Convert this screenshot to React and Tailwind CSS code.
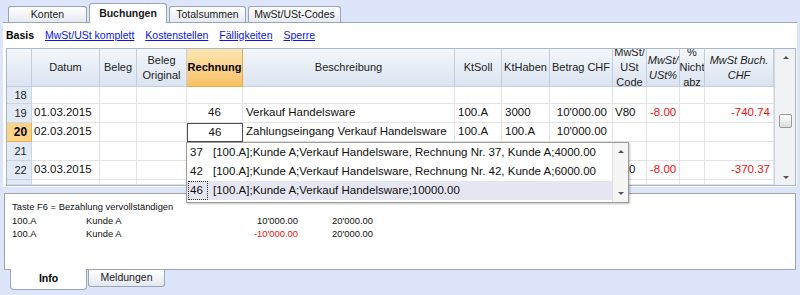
const cols = [
  { w: 'w-[25px]', head: '' },
  { w: 'w-[68px]', head: 'Datum', cell: 'justify-start pl-[2px]' },
  { w: 'w-[37px]', head: 'Beleg', cell: 'justify-start pl-[2px]' },
  { w: 'w-[50px]', head: 'Beleg\nOriginal', cell: 'justify-start pl-[2px]' },
  { w: 'w-[56px]', head: 'Rechnung', cell: 'justify-center' },
  { w: 'w-[212px]', head: 'Beschreibung', cell: 'justify-start pl-[3px]' },
  { w: 'w-[47px]', head: 'KtSoll', cell: 'justify-start pl-[3px]' },
  { w: 'w-[48px]', head: 'KtHaben', cell: 'justify-start pl-[3px]' },
  { w: 'w-[63px]', head: 'Betrag CHF', cell: 'justify-end pr-[5px]' },
  { w: 'w-[34px]', head: 'MwSt/\nUSt\nCode', cell: 'justify-start pl-[2px]' },
  { w: 'w-[33px]', head: 'MwSt/\nUSt%', italic: true, cell: 'justify-start pl-[3px]' },
  { w: 'w-[25px]', head: '%\nNicht\nabz', cell: 'justify-start pl-[2px]' },
  { w: 'w-[69px]', head: 'MwSt Buch.\nCHF', italic: true, cell: 'justify-end pr-[3px]' },
]

const rows = [
  { n: '18', h: 'h-[17px]', v: [] },
  { n: '19', h: 'h-[19px]', v: ['01.03.2015', '', '', '46', 'Verkauf Handelsware', '100.A', '3000', "10'000.00", 'V80', '-8.00', '', '-740.74'] },
  { n: '20', h: 'h-[19px]', v: ['02.03.2015', '', '', '46', 'Zahlungseingang Verkauf Handelsware', '100.A', '100.A', "10'000.00"], current: true },
  { n: '21', h: 'h-[19px]', v: [] },
  { n: '22', h: 'h-[19px]', v: ['03.03.2015', '', '', '', '', '', '', '', 'V80', '-8.00', '', '-370.37'] },
  { n: '', h: 'h-[5px]', v: [] },
]

const redCols = [9, 11]

const popupItems = [
  { n: '37', t: '[100.A];Kunde A;Verkauf Handelsware, Rechnung Nr. 37, Kunde A;4000.00' },
  { n: '42', t: '[100.A];Kunde A;Verkauf Handelsware, Rechnung Nr. 42, Kunde A;6000.00' },
  { n: '46', t: '[100.A];Kunde A;Verkauf Handelsware;10000.00', active: true },
]

function Tab({ label, active, width }) {
  return (
    <div
      className={`${width} flex items-center justify-center border border-[#98a5b9] border-b-0 rounded-t-[3px] text-[10.5px] text-[#1a1a1a] ${
        active
          ? 'h-[20px] bg-white font-bold relative z-10 -mb-px'
          : 'h-[16px] bg-gradient-to-b from-white to-[#e6eaf1]'
      }`}
    >
      {label}
    </div>
  )
}

function UpArrow() {
  return <div className="w-0 h-0 border-l-[3px] border-r-[3px] border-b-[3px] border-l-transparent border-r-transparent border-b-[#555]" />
}

function DownArrow() {
  return <div className="w-0 h-0 border-l-[3px] border-r-[3px] border-t-[3px] border-l-transparent border-r-transparent border-t-[#555]" />
}

export default function App() {
  return (
    <div className="relative w-[800px] h-[295px] overflow-hidden bg-[#dce5fa] font-['Liberation_Sans',Arial,sans-serif] text-black flex flex-col">
      {/* Top tabs */}
      <div className="h-[22px] flex items-end pl-[8px] gap-[2px] shrink-0">
        <Tab label="Konten" width="w-[79px]" />
        <Tab label="Buchungen" width="w-[78px]" active />
        <Tab label="Totalsummen" width="w-[77px]" />
        <Tab label="MwSt/USt-Codes" width="w-[93px]" />
      </div>

      {/* Main panel */}
      <div className="mx-[3px] h-[165px] bg-white border-t border-[#98a5b9] shrink-0 flex flex-col">
        <div className="h-[25px] flex items-center gap-[11px] pl-[3px] text-[10.5px]">
          <span className="font-bold">Basis</span>
          <span className="text-[#0a14f0] underline">MwSt/USt komplett</span>
          <span className="text-[#0a14f0] underline">Kostenstellen</span>
          <span className="text-[#0a14f0] underline">Fälligkeiten</span>
          <span className="text-[#0a14f0] underline">Sperre</span>
        </div>

        {/* Grid */}
        <div className="ml-[3px] w-[790px] h-[138px] border border-[#a8b6ca] flex overflow-hidden">
          <div className="w-[767px] flex flex-col">
            {/* Header */}
            <div className="h-[38px] flex shrink-0">
              {cols.map((c, i) => (
                <div
                  key={i}
                  className={`${c.w} h-full shrink-0 overflow-hidden flex items-center justify-center text-center leading-[15px] text-[11px] text-[#222] border-r border-b ${
                    i === 4
                      ? 'bg-gradient-to-b from-[#fde6b2] to-[#f7c163] border-[#e9a84a] font-bold text-black'
                      : 'bg-gradient-to-b from-[#f4f7fc] to-[#dbe4f0] border-[#c2cddd]'
                  } ${c.italic ? 'italic' : ''}`}
                >
                  <span className="whitespace-pre">{c.head}</span>
                </div>
              ))}
            </div>

            {/* Rows */}
            {rows.map((r, ri) => (
              <div key={ri} className={`${r.h} flex shrink-0 text-[11.5px]`}>
                <div
                  className={`w-[25px] shrink-0 flex items-center justify-center pl-[3px] border-r border-b overflow-hidden ${
                    r.current
                      ? 'bg-[#fbd488] border-[#e9b055] font-bold text-[12px]'
                      : 'bg-[#e2eaf6] border-[#c9d4e4] text-[11px] text-[#222]'
                  }`}
                >
                  {r.n}
                </div>
                {cols.slice(1).map((c, ci) => {
                  const val = r.v[ci] || ''
                  const editing = r.current && ci === 3
                  return (
                    <div
                      key={ci}
                      className={`${c.w} shrink-0 flex items-center overflow-hidden whitespace-nowrap ${c.cell} ${
                        editing ? 'border border-[#4d4d4d]' : 'border-r border-b border-[#e3e3e3]'
                      } ${redCols.includes(ci) ? 'text-[#f01010]' : 'text-[#111]'}`}
                    >
                      {val}
                    </div>
                  )
                })}
              </div>
            ))}
          </div>

          {/* Vertical scrollbar */}
          <div className="w-[22px] shrink-0 bg-[#f1f2f5] border-l border-[#cfd6e0] flex flex-col items-center">
            <div className="h-[16px] flex items-center justify-center">
              <UpArrow />
            </div>
            <div className="h-[49px]" />
            <div className="w-[13px] h-[14px] rounded-[2px] border border-[#9a9a9a] bg-gradient-to-b from-white to-[#dcdcdc]" />
            <div className="flex-1" />
            <div className="h-[16px] flex items-center justify-center">
              <DownArrow />
            </div>
          </div>
        </div>
      </div>

      {/* Info panel */}
      <div className="mt-[6px] mx-[4px] h-[77px] bg-white border border-[#a4a4a4] shrink-0 pt-[6px] pl-[7px] text-[9.4px] leading-[13.5px] text-[#111]">
        <div>Taste F6 = Bezahlung vervollständigen</div>
        <div className="flex">
          <span className="w-[74px]">100.A</span>
          <span className="w-[150px]">Kunde A</span>
          <span className="w-[62px] text-right">10'000.00</span>
          <span className="w-[75px] text-right">20'000.00</span>
        </div>
        <div className="flex">
          <span className="w-[74px]">100.A</span>
          <span className="w-[150px]">Kunde A</span>
          <span className="w-[62px] text-right text-[#f01010]">-10'000.00</span>
          <span className="w-[75px] text-right">20'000.00</span>
        </div>
      </div>

      {/* Bottom tabs */}
      <div className="flex items-start pl-[10px] gap-px">
        <div className="w-[77px] h-[21px] -mt-px bg-white border border-t-0 border-[#98a5b9] rounded-b-[4px] flex items-center justify-center text-[10.5px] font-bold">
          Info
        </div>
        <div className="w-[77px] h-[17px] bg-gradient-to-b from-white to-[#e4e7ee] border border-t-0 border-[#98a5b9] rounded-b-[3px] flex items-center justify-center text-[10.5px] text-[#1a1a1a]">
          Meldungen
        </div>
      </div>

      {/* Autocomplete popup */}
      <div className="absolute left-[186px] top-[142px] w-[443px] h-[61px] bg-white border border-[#9c9c9c] shadow-[1px_1px_2px_rgba(0,0,0,0.25)] z-20 flex">
        <div className="w-[425px] flex flex-col">
          {popupItems.map((p) => (
            <div
              key={p.n}
              className={`h-[19px] flex items-center text-[11.5px] text-[#111] whitespace-nowrap ${p.active ? 'bg-[#e6e6f3]' : ''}`}
            >
              <span
                className={`w-[20px] h-[19px] ml-px flex items-center pl-[1px] ${
                  p.active ? 'border border-dotted border-[#333]' : 'border border-transparent'
                }`}
              >
                {p.n}
              </span>
              <span className="ml-[5px]">{p.t}</span>
            </div>
          ))}
        </div>
        <div className="w-[16px] ml-auto bg-[#f5f5f5] border-l border-[#e0e0e0] flex flex-col items-center justify-between py-[7px]">
          <UpArrow />
          <DownArrow />
        </div>
      </div>
    </div>
  )
}
